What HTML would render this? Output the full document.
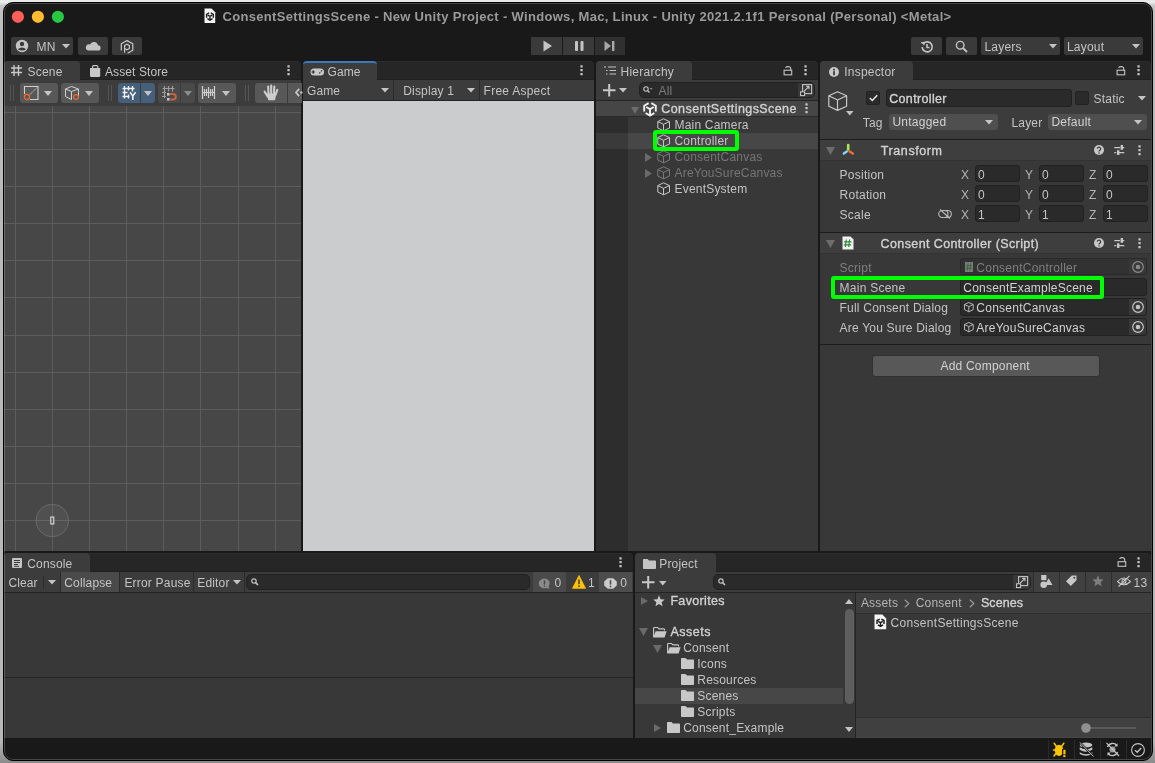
<!DOCTYPE html>
<html><head><meta charset="utf-8">
<style>
*{box-sizing:border-box;margin:0;padding:0}
html,body{width:1155px;height:763px;overflow:hidden;background:linear-gradient(#e6e6e6 0px,#eeeeee 2px,#c4c4c4 6px,#bababa 40px,#b8b8b8 740px,#8a8a8a 763px);font-family:"Liberation Sans",sans-serif;font-size:12px;color:#c4c4c4}
.a{position:absolute}
#win{position:absolute;left:3px;top:2px;width:1150px;height:759px;border:1px solid #000;border-radius:10px;background:#191919;overflow:hidden}
#c{position:absolute;left:-4px;top:-3px;width:1155px;height:763px;will-change:transform}
.t{position:absolute;white-space:nowrap}
svg{position:absolute;overflow:visible}
</style></head><body>
<div id="win"><div id="c">
<svg style="left:0px;top:0px;" width="80" height="30" viewBox="0 0 80 30"><circle cx="17.9" cy="16.8" r="6.1" fill="#ff5f57"/><circle cx="37.9" cy="16.8" r="6.1" fill="#febc2e"/><circle cx="57.9" cy="16.8" r="6.1" fill="#28c840"/></svg>
<svg style="left:204px;top:8px;" width="12" height="16" viewBox="0 0 12 16"><path d="M0.5 0.5H7.5L11.2 4.2V15H0.5Z" fill="#f4f4f4"/><g transform="translate(1.9 4.2) scale(0.58)"><g fill="none" stroke="#1a1a1a" stroke-width="2.4" stroke-linejoin="miter"><path d="M5.6 1.2L1.2 3.7V9.6"/><path d="M8.4 1.2L12.8 3.7V9.6"/><path d="M3.2 5L7 7.1L10.8 5M7 7.1V13"/><path d="M2.6 11L7 13.6L11.4 11"/></g></g></svg>
<div class="t" style="left:222.5px;top:10px;font-size:13px;line-height:13px;color:#9a9a9a;font-weight:bold;letter-spacing:0.32px;">ConsentSettingsScene - New Unity Project - Windows, Mac, Linux - Unity 2021.2.1f1 Personal (Personal) &lt;Metal&gt;</div>
<div class="a" style="left:11px;top:37px;width:62px;height:18px;background:#3a3a3a;border-radius:2px"></div>
<svg style="left:15px;top:39px;" width="14" height="14" viewBox="0 0 14 14"><circle cx="7" cy="7" r="6.2" fill="#c4c4c4"/><circle cx="7" cy="5" r="2.2" fill="#3a3a3a"/><path d="M2.8 10.2Q7 6.8 11.2 10.2Q7 13 2.8 10.2Z" fill="#3a3a3a"/></svg>
<div class="t" style="left:36.5px;top:41px;font-size:12px;line-height:12px;color:#c4c4c4;letter-spacing:0.3px;">MN</div>
<svg style="left:62.0px;top:44px;" width="8" height="4.5" viewBox="0 0 8 4.5"><path d="M0 0H8L4.0 4.5Z" fill="#c4c4c4"/></svg>
<div class="a" style="left:78px;top:37px;width:30px;height:18px;background:#3a3a3a;border-radius:2px"></div>
<svg style="left:85px;top:40px;" width="16" height="12" viewBox="0 0 16 12"><path d="M3 10.5H13A2.6 2.6 0 0 0 13 5.3A4.2 4.2 0 0 0 5 4.5A3 3 0 0 0 3 10.5Z" fill="#c4c4c4"/></svg>
<div class="a" style="left:112px;top:37px;width:30px;height:18px;background:#3a3a3a;border-radius:2px"></div>
<svg style="left:119px;top:40px;" width="16" height="14" viewBox="0 0 16 14"><path d="M2.3 10.6V3.8L8 0.6L13.8 3.8V10.3L8.6 13.3" fill="none" stroke="#c8c8c8" stroke-width="1.2" stroke-linejoin="round"/><path d="M5.6 12.8V5.6L8 4.2L10.4 5.6V8.4L8 9.8L5.6 8.4" fill="none" stroke="#c8c8c8" stroke-width="1.2" stroke-linejoin="round"/></svg>
<div class="a" style="left:531px;top:37px;width:31px;height:18px;background:#3a3a3a;"></div>
<div class="a" style="left:563px;top:37px;width:31px;height:18px;background:#3a3a3a;"></div>
<div class="a" style="left:595px;top:37px;width:30px;height:18px;background:#303030;"></div>
<svg style="left:543px;top:40px;" width="10" height="12" viewBox="0 0 10 12"><path d="M0.5 0.5L9 6L0.5 11.5Z" fill="#c4c4c4"/></svg>
<svg style="left:575px;top:41px;" width="9" height="10" viewBox="0 0 9 10"><rect x="0" y="0" width="3" height="10" rx="1" fill="#c4c4c4"/><rect x="5.5" y="0" width="3" height="10" rx="1" fill="#c4c4c4"/></svg>
<svg style="left:604px;top:41px;" width="11" height="10" viewBox="0 0 11 10"><path d="M0.5 0L7 5L0.5 10Z" fill="#a8a8a8"/><rect x="8" y="0" width="2.4" height="10" fill="#a8a8a8"/></svg>
<div class="a" style="left:911px;top:37px;width:31px;height:18px;background:#3a3a3a;border-radius:2px"></div>
<svg style="left:919px;top:39px;" width="16" height="16" viewBox="0 0 16 16"><path d="M3.2 8A5 5 0 1 0 4.6 4.4" fill="none" stroke="#c4c4c4" stroke-width="1.6"/><path d="M1.5 3.2L5.6 2.8L5.4 6.6Z" fill="#c4c4c4"/><path d="M8 5V8.5H10.5" fill="none" stroke="#c4c4c4" stroke-width="1.6"/></svg>
<div class="a" style="left:946px;top:37px;width:31px;height:18px;background:#3a3a3a;border-radius:2px"></div>
<svg style="left:955px;top:40px;" width="14" height="14" viewBox="0 0 14 14"><circle cx="5.2" cy="5.2" r="3.8" fill="none" stroke="#c4c4c4" stroke-width="1.4"/><path d="M8 8L12 12" stroke="#c4c4c4" stroke-width="1.8"/></svg>
<div class="a" style="left:981px;top:37px;width:79px;height:18px;background:#3a3a3a;border-radius:2px"></div>
<div class="t" style="left:984.5px;top:41px;font-size:12px;line-height:12px;color:#c4c4c4;letter-spacing:0.2px;">Layers</div>
<svg style="left:1049.0px;top:44px;" width="8" height="4.5" viewBox="0 0 8 4.5"><path d="M0 0H8L4.0 4.5Z" fill="#c4c4c4"/></svg>
<div class="a" style="left:1064px;top:37px;width:79px;height:18px;background:#3a3a3a;border-radius:2px"></div>
<div class="t" style="left:1067px;top:41px;font-size:12px;line-height:12px;color:#c4c4c4;letter-spacing:0.2px;">Layout</div>
<svg style="left:1132.0px;top:44px;" width="8" height="4.5" viewBox="0 0 8 4.5"><path d="M0 0H8L4.0 4.5Z" fill="#c4c4c4"/></svg>
<div class="a" style="left:4px;top:61px;width:297px;height:19px;background:#262626;border-radius:4px 4px 0 0;border-top:1px solid #2c2c2c;border-bottom:1px solid #202020"></div>
<div class="a" style="left:4px;top:61px;width:76px;height:19px;background:#3c3c3c;border-radius:4px 4px 0 0"></div>
<div class="a" style="left:4px;top:80px;width:297px;height:26px;background:#3c3c3c;"></div>
<div class="a" style="left:4px;top:106px;width:297px;height:445px;background:#474747;overflow:hidden"></div>
<div class="a" style="left:303px;top:61px;width:291px;height:19px;background:#262626;border-radius:4px 4px 0 0;border-top:1px solid #2c2c2c;border-bottom:1px solid #202020"></div>
<div class="a" style="left:303px;top:61px;width:74px;height:19px;background:#3c3c3c;border-radius:4px 4px 0 0;border-top:2px solid #3a79bb"></div>
<div class="a" style="left:303px;top:80px;width:291px;height:21px;background:#3c3c3c;"></div>
<div class="a" style="left:303px;top:101px;width:291px;height:450px;background:#cbcccd;"></div>
<div class="a" style="left:596px;top:61px;width:222px;height:19px;background:#262626;border-radius:4px 4px 0 0;border-top:1px solid #2c2c2c;border-bottom:1px solid #202020"></div>
<div class="a" style="left:596px;top:61px;width:96px;height:19px;background:#3c3c3c;border-radius:4px 4px 0 0"></div>
<div class="a" style="left:596px;top:80px;width:222px;height:21px;background:#3c3c3c;"></div>
<div class="a" style="left:596px;top:101px;width:222px;height:450px;background:#383838;"></div>
<div class="a" style="left:820px;top:61px;width:331px;height:19px;background:#262626;border-radius:4px 4px 0 0;border-top:1px solid #2c2c2c;border-bottom:1px solid #202020"></div>
<div class="a" style="left:820px;top:61px;width:93px;height:19px;background:#3c3c3c;border-radius:4px 4px 0 0"></div>
<div class="a" style="left:820px;top:80px;width:331px;height:471px;background:#383838;"></div>
<div class="a" style="left:820px;top:80px;width:331px;height:59px;background:#3c3c3c;"></div>
<div class="a" style="left:4px;top:553px;width:629px;height:19px;background:#262626;border-radius:4px 4px 0 0;border-top:1px solid #2c2c2c;border-bottom:1px solid #202020"></div>
<div class="a" style="left:4px;top:553px;width:86px;height:19px;background:#3c3c3c;border-radius:4px 4px 0 0"></div>
<div class="a" style="left:4px;top:572px;width:629px;height:20px;background:#3c3c3c;"></div>
<div class="a" style="left:4px;top:592px;width:629px;height:146px;background:#383838;"></div>
<div class="a" style="left:635px;top:553px;width:516px;height:19px;background:#262626;border-radius:4px 4px 0 0;border-top:1px solid #2c2c2c;border-bottom:1px solid #202020"></div>
<div class="a" style="left:635px;top:553px;width:81px;height:19px;background:#3c3c3c;border-radius:4px 4px 0 0"></div>
<div class="a" style="left:635px;top:572px;width:516px;height:20px;background:#3c3c3c;"></div>
<div class="a" style="left:635px;top:592px;width:516px;height:146px;background:#383838;"></div>
<svg style="left:11px;top:65px;" width="11" height="11" viewBox="0 0 11 11"><path d="M3 0V11M7.5 0V11M0 3H11M0 7.5H11" stroke="#c8c8c8" stroke-width="1.4"/></svg>
<div class="t" style="left:27.5px;top:66px;font-size:12px;line-height:12px;color:#c4c4c4;letter-spacing:0.2px;">Scene</div>
<svg style="left:89px;top:64px;" width="12" height="14" viewBox="0 0 12 14"><path d="M3.6 4.5V2.8Q3.6 1.6 4.8 1.6H7.6Q8.8 1.6 8.8 2.8V4.5" fill="none" stroke="#c8c8c8" stroke-width="1.2"/><path d="M1 4H11.2V11.8Q11.2 12.9 10.1 12.9H2.1Q1 12.9 1 11.8Z" fill="#c8c8c8"/></svg>
<div class="t" style="left:105px;top:66px;font-size:12px;line-height:12px;color:#c4c4c4;letter-spacing:0.1px;">Asset Store</div>
<svg style="left:286.5px;top:65px;" width="3" height="11" viewBox="0 0 3 11"><rect x="0.4" y="0.2" width="2.3" height="2.3" rx="0.5" fill="#c4c4c4"/><rect x="0.4" y="4.05" width="2.3" height="2.3" rx="0.5" fill="#c4c4c4"/><rect x="0.4" y="7.9" width="2.3" height="2.3" rx="0.5" fill="#c4c4c4"/></svg>
<div class="a" style="left:10px;top:85px;width:1px;height:16px;background:#555555;"></div>
<div class="a" style="left:13px;top:85px;width:1px;height:16px;background:#555555;"></div>
<div class="a" style="left:20px;top:83px;width:38px;height:20px;background:#585858;border-radius:3px"></div>
<svg style="left:24px;top:86px;" width="15" height="15" viewBox="0 0 15 15"><path d="M0.5 8V0.5H14V13.5H6" fill="none" stroke="#d0d0d0" stroke-width="1.1"/><path d="M5 9.5L13 1.5" stroke="#d0d0d0" stroke-width="1" stroke-dasharray="1.3 0.7"/><circle cx="3" cy="11" r="2.6" fill="none" stroke="#f06a2e" stroke-width="1.2"/></svg>
<svg style="left:44.0px;top:91px;" width="8" height="5" viewBox="0 0 8 5"><path d="M0 0H8L4.0 5Z" fill="#c4c4c4"/></svg>
<div class="a" style="left:61px;top:83px;width:38px;height:20px;background:#585858;border-radius:3px"></div>
<svg style="left:65px;top:86px;" width="15" height="15" viewBox="0 0 15 15"><path d="M6.5 0.5L13.5 3V10.5M13.5 3L6.5 5.5L0.5 3L6.5 0.5M0.5 3V10.5L6.5 13.5M6.5 5.5V13.5" fill="none" stroke="#d0d0d0" stroke-width="1"/><circle cx="11" cy="11" r="2.4" fill="#585858" stroke="#f06a2e" stroke-width="1.2"/></svg>
<svg style="left:85.0px;top:91px;" width="8" height="5" viewBox="0 0 8 5"><path d="M0 0H8L4.0 5Z" fill="#c4c4c4"/></svg>
<div class="a" style="left:108px;top:85px;width:1px;height:16px;background:#555555;"></div>
<div class="a" style="left:111px;top:85px;width:1px;height:16px;background:#555555;"></div>
<div class="a" style="left:118px;top:83px;width:22px;height:20px;background:#46607c;border-radius:3px 0 0 3px"></div>
<div class="a" style="left:141px;top:83px;width:14px;height:20px;background:#46607c;border-radius:0 3px 3px 0"></div>
<svg style="left:122px;top:86px;" width="15" height="15" viewBox="0 0 15 15"><path d="M2.5 0V12.5M6.5 0V4.5M6.5 8.5V12.5M10.5 0V5.5M0.5 2.5H12.5M0.5 6.5H5.5M0.5 10.5H7.5" stroke="#f0f0f0" stroke-width="1.3"/><path d="M8 6.3L10.8 10L13.6 6.3M10.8 10V14" fill="none" stroke="#f0f0f0" stroke-width="1.6"/></svg>
<svg style="left:144.0px;top:91px;" width="8" height="5" viewBox="0 0 8 5"><path d="M0 0H8L4.0 5Z" fill="#c4c4c4"/></svg>
<div class="a" style="left:158px;top:83px;width:22px;height:20px;background:#4a4a4a;border-radius:3px 0 0 3px"></div>
<div class="a" style="left:181px;top:83px;width:14px;height:20px;background:#4a4a4a;border-radius:0 3px 3px 0"></div>
<svg style="left:162px;top:86px;" width="15" height="15" viewBox="0 0 15 15"><path d="M2.5 0V12M6.5 0V5.5M10.5 0V5.5M0.5 2.5H12.5M0 6.5H4M0 10.5H4" stroke="#9c9c9c" stroke-width="1.2"/><rect x="5" y="7" width="2.6" height="2.6" fill="#c4c4c4"/><rect x="5" y="12" width="2.6" height="2.6" fill="#c4c4c4"/><path d="M8.3 8H11A2.75 2.75 0 0 1 11 13.5H8.3" fill="none" stroke="#c8643c" stroke-width="2"/></svg>
<svg style="left:184.0px;top:91px;" width="8" height="5" viewBox="0 0 8 5"><path d="M0 0H8L4.0 5Z" fill="#8c8c8c"/></svg>
<div class="a" style="left:198px;top:83px;width:38px;height:20px;background:#585858;border-radius:3px"></div>
<svg style="left:202px;top:86px;" width="14" height="14" viewBox="0 0 14 14"><path d="M0.5 0V13M12.5 0V13M6.5 1V12M2.5 3V10M4.5 3V10M8.5 3V10M10.5 3V10M0.5 6.5H12.5" stroke="#d0d0d0" stroke-width="1.2"/></svg>
<svg style="left:222.0px;top:91px;" width="8" height="5" viewBox="0 0 8 5"><path d="M0 0H8L4.0 5Z" fill="#c4c4c4"/></svg>
<div class="a" style="left:245px;top:85px;width:1px;height:16px;background:#555555;"></div>
<div class="a" style="left:248px;top:85px;width:1px;height:16px;background:#555555;"></div>
<div class="a" style="left:255px;top:83px;width:32px;height:20px;background:#585858;border-radius:3px 0 0 3px"></div>
<svg style="left:262px;top:84px;" width="17" height="17" viewBox="0 0 17 17"><g stroke="#cccccc" stroke-width="2.1" stroke-linecap="round"><path d="M2.6 7.6L6 13M6.2 2.6L6.5 10M9.2 1.6V10M12.3 2.6L12 10M15.3 5.9L13.5 11"/></g><path d="M4.8 9.5H14.4L13 16.2H6.3Z" fill="#cccccc"/></svg>
<div class="a" style="left:288px;top:83px;width:14px;height:20px;background:#585858;"></div>
<svg style="left:295px;top:88px;" width="8" height="9" viewBox="0 0 8 9"><path d="M4.2 0.8L1 4.5L4.2 8.2" fill="none" stroke="#c4c4c4" stroke-width="1.8"/><circle cx="6.3" cy="4.5" r="1.2" fill="#c4c4c4"/></svg>
<svg style="left:4px;top:106px;overflow:hidden" width="297" height="445" viewBox="0 0 297 445"><rect x="11" y="0" width="1" height="445" fill="#5d5d5d"/><rect x="48" y="0" width="1" height="445" fill="#5d5d5d"/><rect x="85" y="0" width="1" height="445" fill="#5d5d5d"/><rect x="122" y="0" width="1" height="445" fill="#5d5d5d"/><rect x="159" y="0" width="1" height="445" fill="#5d5d5d"/><rect x="196" y="0" width="1" height="445" fill="#5d5d5d"/><rect x="234" y="0" width="1" height="445" fill="#5d5d5d"/><rect x="271" y="0" width="1" height="445" fill="#5d5d5d"/><rect x="0" y="6" width="297" height="1" fill="#5d5d5d"/><rect x="0" y="43" width="297" height="1" fill="#5d5d5d"/><rect x="0" y="80" width="297" height="1" fill="#5d5d5d"/><rect x="0" y="117" width="297" height="1" fill="#5d5d5d"/><rect x="0" y="154" width="297" height="1" fill="#5d5d5d"/><rect x="0" y="191" width="297" height="1" fill="#5d5d5d"/><rect x="0" y="229" width="297" height="1" fill="#5d5d5d"/><rect x="0" y="266" width="297" height="1" fill="#5d5d5d"/><rect x="0" y="303" width="297" height="1" fill="#5d5d5d"/><rect x="0" y="340" width="297" height="1" fill="#5d5d5d"/><rect x="0" y="377" width="297" height="1" fill="#5d5d5d"/><rect x="0" y="414" width="297" height="1" fill="#5d5d5d"/><circle cx="48.3" cy="414.5" r="16.3" fill="#ffffff" fill-opacity="0.05" stroke="#707070" stroke-width="0.8"/><rect x="46.8" y="411" width="3" height="7" fill="none" stroke="#e8e8e8" stroke-width="1"/></svg>
<svg style="left:310px;top:68px;" width="15" height="8" viewBox="0 0 15 8"><rect x="0.5" y="0.5" width="13.5" height="7" rx="3.5" fill="#c8c8c8"/><path d="M3.2 2.3V5.7M1.5 4H4.9" stroke="#2a2a2a" stroke-width="1.1"/><path d="M9.3 5.3L10.3 4.3M11 3.3L12 2.3" stroke="#2a2a2a" stroke-width="1.2"/></svg>
<div class="t" style="left:327.5px;top:66px;font-size:12px;line-height:12px;color:#c4c4c4;letter-spacing:0.1px;">Game</div>
<svg style="left:579.5px;top:65px;" width="3" height="11" viewBox="0 0 3 11"><rect x="0.4" y="0.2" width="2.3" height="2.3" rx="0.5" fill="#c4c4c4"/><rect x="0.4" y="4.05" width="2.3" height="2.3" rx="0.5" fill="#c4c4c4"/><rect x="0.4" y="7.9" width="2.3" height="2.3" rx="0.5" fill="#c4c4c4"/></svg>
<div class="a" style="left:303px;top:100px;width:291px;height:1px;background:#232323;"></div>
<div class="t" style="left:307px;top:85px;font-size:12px;line-height:12px;color:#c4c4c4;letter-spacing:0.1px;">Game</div>
<svg style="left:381.0px;top:88px;" width="8" height="4.5" viewBox="0 0 8 4.5"><path d="M0 0H8L4.0 4.5Z" fill="#c4c4c4"/></svg>
<div class="a" style="left:393px;top:80px;width:1px;height:20px;background:#2a2a2a;"></div>
<div class="t" style="left:403.3px;top:85px;font-size:12px;line-height:12px;color:#c4c4c4;letter-spacing:0.15px;">Display 1</div>
<svg style="left:467.0px;top:88px;" width="8" height="4.5" viewBox="0 0 8 4.5"><path d="M0 0H8L4.0 4.5Z" fill="#c4c4c4"/></svg>
<div class="a" style="left:479px;top:80px;width:1px;height:20px;background:#2a2a2a;"></div>
<div class="t" style="left:483.6px;top:85px;font-size:12px;line-height:12px;color:#c4c4c4;letter-spacing:0.25px;">Free Aspect</div>
<svg style="left:604px;top:66px;" width="12" height="10" viewBox="0 0 12 10"><path d="M0 1H2M4 1H12M2 4.5H3.5M5.5 4.5H12M2 8H3.5M5.5 8H12" stroke="#c4c4c4" stroke-width="1.2"/></svg>
<div class="t" style="left:620.5px;top:66px;font-size:12px;line-height:12px;color:#c4c4c4;letter-spacing:0.25px;">Hierarchy</div>
<svg style="left:783px;top:66px;" width="10" height="9" viewBox="0 0 10 9"><path d="M7.7 4.2V2.6Q7.7 0.6 5.2 0.6Q3.3 0.6 2.5 1.8" fill="none" stroke="#c4c4c4" stroke-width="1.1"/><rect x="1.1" y="4.2" width="7.6" height="4.6" fill="none" stroke="#c4c4c4" stroke-width="1.1"/></svg>
<svg style="left:803.5px;top:65px;" width="3" height="11" viewBox="0 0 3 11"><rect x="0.4" y="0.2" width="2.3" height="2.3" rx="0.5" fill="#c4c4c4"/><rect x="0.4" y="4.05" width="2.3" height="2.3" rx="0.5" fill="#c4c4c4"/><rect x="0.4" y="7.9" width="2.3" height="2.3" rx="0.5" fill="#c4c4c4"/></svg>
<div class="a" style="left:596px;top:100px;width:222px;height:1px;background:#232323;"></div>
<svg style="left:603px;top:84px;" width="13" height="13" viewBox="0 0 13 13"><path d="M6.2 0V12.5M0 6.2H12.5" stroke="#c8c8c8" stroke-width="2"/></svg>
<svg style="left:619.0px;top:88px;" width="8" height="4.5" viewBox="0 0 8 4.5"><path d="M0 0H8L4.0 4.5Z" fill="#c4c4c4"/></svg>
<div class="a" style="left:639px;top:82px;width:176px;height:16px;background:#2a2a2a;border-radius:5px;border:1px solid #212121"></div>
<svg style="left:643px;top:86px;" width="10" height="8" viewBox="0 0 10 8"><circle cx="3" cy="3" r="2.2" fill="none" stroke="#c4c4c4" stroke-width="1.1"/><path d="M4.6 4.6L6.5 6.5" stroke="#c4c4c4" stroke-width="1.3"/><path d="M6.8 2.2H9.5L8.15 3.6Z" fill="#c4c4c4"/></svg>
<div class="t" style="left:658.5px;top:85px;font-size:12px;line-height:12px;color:#7c7c7c;letter-spacing:0.2px;">All</div>
<div class="a" style="left:798px;top:83px;width:16px;height:14px;background:#383838;border-radius:0 4px 4px 0"></div>
<svg style="left:800px;top:84px;" width="13" height="13" viewBox="0 0 13 13"><rect x="2.6" y="0.6" width="9" height="9" fill="none" stroke="#c4c4c4" stroke-width="1.1"/><rect x="0.6" y="7.8" width="4" height="3.8" fill="#2a2a2a" stroke="#c4c4c4" stroke-width="1.1"/><path d="M4.2 7.2L9 2.4M6.2 2.4H9V5.2" fill="none" stroke="#c4c4c4" stroke-width="1.1"/></svg>
<div class="a" style="left:596px;top:101px;width:222px;height:15px;background:#464646;"></div>
<div class="a" style="left:596px;top:116px;width:222px;height:1px;background:#2a2a2a;"></div>
<div class="a" style="left:596px;top:117px;width:32px;height:434px;background:#2d2d2d;"></div>
<div class="a" style="left:596px;top:133px;width:32px;height:16px;background:#3a3a3a;"></div>
<div class="a" style="left:628px;top:133px;width:190px;height:16px;background:#474747;"></div>
<svg style="left:630.5px;top:106.5px;" width="8" height="7" viewBox="0 0 8 7"><path d="M0 0H8L4.0 7Z" fill="#6c6c6c"/></svg>
<svg style="left:643px;top:102px;" width="14" height="14" viewBox="0 0 14 14"><g fill="none" stroke="#f0f0f0" stroke-width="1.9" stroke-linejoin="miter"><path d="M5.6 1.2L1.2 3.7V9.6"/><path d="M8.4 1.2L12.8 3.7V9.6"/><path d="M3.2 5L7 7.1L10.8 5M7 7.1V13"/><path d="M2.6 11L7 13.6L11.4 11"/></g></svg>
<div class="t" style="left:661.3px;top:103px;font-size:12.5px;line-height:12.5px;color:#d2d2d2;-webkit-text-stroke:0.35px #d2d2d2;letter-spacing:0.42px;">ConsentSettingsScene</div>
<svg style="left:804.5px;top:103px;" width="3" height="11" viewBox="0 0 3 11"><rect x="0.4" y="0.2" width="2.3" height="2.3" rx="0.5" fill="#c4c4c4"/><rect x="0.4" y="4.05" width="2.3" height="2.3" rx="0.5" fill="#c4c4c4"/><rect x="0.4" y="7.9" width="2.3" height="2.3" rx="0.5" fill="#c4c4c4"/></svg>
<svg style="left:657px;top:118px;" width="14" height="14" viewBox="0 0 14 14"><g fill="none" stroke="#c8c8c8" stroke-width="1" stroke-linejoin="round"><path d="M6.5 0.8L12.5 3.6V10L6.5 12.8L0.8 10V3.6Z"/><path d="M0.8 3.6L6.5 6.3L12.5 3.6M6.5 6.3V12.8"/></g></svg>
<div class="t" style="left:674.5px;top:119px;font-size:12px;line-height:12px;color:#c4c4c4;letter-spacing:0.2px;">Main Camera</div>
<svg style="left:657px;top:134px;" width="14" height="14" viewBox="0 0 14 14"><g fill="none" stroke="#c8c8c8" stroke-width="1" stroke-linejoin="round"><path d="M6.5 0.8L12.5 3.6V10L6.5 12.8L0.8 10V3.6Z"/><path d="M0.8 3.6L6.5 6.3L12.5 3.6M6.5 6.3V12.8"/></g></svg>
<div class="t" style="left:674.5px;top:135px;font-size:12px;line-height:12px;color:#c4c4c4;letter-spacing:0.2px;">Controller</div>
<svg style="left:657px;top:150px;" width="14" height="14" viewBox="0 0 14 14"><g fill="none" stroke="#7a7a7a" stroke-width="1" stroke-linejoin="round"><path d="M6.5 0.8L12.5 3.6V10L6.5 12.8L0.8 10V3.6Z"/><path d="M0.8 3.6L6.5 6.3L12.5 3.6M6.5 6.3V12.8"/></g></svg>
<div class="t" style="left:674.5px;top:151px;font-size:12px;line-height:12px;color:#767676;letter-spacing:0.2px;">ConsentCanvas</div>
<svg style="left:645px;top:152.5px;" width="7" height="9" viewBox="0 0 7 9"><path d="M0 0L7 4.5L0 9Z" fill="#6a6a6a"/></svg>
<svg style="left:657px;top:166px;" width="14" height="14" viewBox="0 0 14 14"><g fill="none" stroke="#7a7a7a" stroke-width="1" stroke-linejoin="round"><path d="M6.5 0.8L12.5 3.6V10L6.5 12.8L0.8 10V3.6Z"/><path d="M0.8 3.6L6.5 6.3L12.5 3.6M6.5 6.3V12.8"/></g></svg>
<div class="t" style="left:674.5px;top:167px;font-size:12px;line-height:12px;color:#767676;letter-spacing:0.2px;">AreYouSureCanvas</div>
<svg style="left:645px;top:168.5px;" width="7" height="9" viewBox="0 0 7 9"><path d="M0 0L7 4.5L0 9Z" fill="#6a6a6a"/></svg>
<svg style="left:657px;top:182px;" width="14" height="14" viewBox="0 0 14 14"><g fill="none" stroke="#c8c8c8" stroke-width="1" stroke-linejoin="round"><path d="M6.5 0.8L12.5 3.6V10L6.5 12.8L0.8 10V3.6Z"/><path d="M0.8 3.6L6.5 6.3L12.5 3.6M6.5 6.3V12.8"/></g></svg>
<div class="t" style="left:674.5px;top:183px;font-size:12px;line-height:12px;color:#c4c4c4;letter-spacing:0.2px;">EventSystem</div>
<svg style="left:829px;top:67px;" width="10" height="10" viewBox="0 0 10 10"><circle cx="5" cy="5" r="5" fill="#c8c8c8"/><rect x="4.1" y="4.2" width="1.8" height="4" fill="#3c3c3c"/><rect x="4.1" y="1.8" width="1.8" height="1.7" fill="#3c3c3c"/></svg>
<div class="t" style="left:844.3px;top:66px;font-size:12px;line-height:12px;color:#c4c4c4;letter-spacing:0.2px;">Inspector</div>
<svg style="left:1116px;top:66px;" width="10" height="9" viewBox="0 0 10 9"><path d="M7.7 4.2V2.6Q7.7 0.6 5.2 0.6Q3.3 0.6 2.5 1.8" fill="none" stroke="#c4c4c4" stroke-width="1.1"/><rect x="1.1" y="4.2" width="7.6" height="4.6" fill="none" stroke="#c4c4c4" stroke-width="1.1"/></svg>
<svg style="left:1136.5px;top:65px;" width="3" height="11" viewBox="0 0 3 11"><rect x="0.4" y="0.2" width="2.3" height="2.3" rx="0.5" fill="#c4c4c4"/><rect x="0.4" y="4.05" width="2.3" height="2.3" rx="0.5" fill="#c4c4c4"/><rect x="0.4" y="7.9" width="2.3" height="2.3" rx="0.5" fill="#c4c4c4"/></svg>
<svg style="left:828px;top:91px;" width="20" height="21" viewBox="0 0 20 21"><g fill="none" stroke="#c8c8c8" stroke-width="1.2" stroke-linejoin="round"><path d="M9.5 0.8L18.6 4.8V15.2L9.5 19.4L0.8 15.2V4.8Z"/><path d="M0.8 4.8L9.5 9L18.6 4.8M9.5 9V19.4"/></g></svg>
<svg style="left:846.45px;top:111px;" width="7.5" height="4.5" viewBox="0 0 7.5 4.5"><path d="M0 0H7.5L3.75 4.5Z" fill="#c4c4c4"/></svg>
<div class="a" style="left:866px;top:91px;width:14px;height:14px;background:#2a2a2a;border-radius:2px;border:1px solid #222"></div>
<svg style="left:869px;top:94px;" width="9" height="8" viewBox="0 0 9 8"><path d="M0.8 4L3.3 6.5L8.2 1.2" fill="none" stroke="#e8e8e8" stroke-width="1.5"/></svg>
<div class="a" style="left:886px;top:89px;width:186px;height:18px;background:#2a2a2a;border-radius:3px;border:1px solid #212121"></div>
<div class="t" style="left:889.2px;top:93px;font-size:12.5px;line-height:12.5px;color:#d2d2d2;-webkit-text-stroke:0.35px #d2d2d2;letter-spacing:0.35px;">Controller</div>
<div class="a" style="left:1075px;top:91px;width:14px;height:14px;background:#2a2a2a;border-radius:2px;border:1px solid #222"></div>
<div class="t" style="left:1093.6px;top:93px;font-size:12px;line-height:12px;color:#c4c4c4;letter-spacing:0.2px;">Static</div>
<svg style="left:1138.0px;top:96px;" width="8" height="4.5" viewBox="0 0 8 4.5"><path d="M0 0H8L4.0 4.5Z" fill="#c4c4c4"/></svg>
<div class="t" style="left:862.7px;top:117px;font-size:12px;line-height:12px;color:#c4c4c4;letter-spacing:0.2px;">Tag</div>
<div class="a" style="left:889px;top:114px;width:109px;height:16px;background:#4f4f4f;border-radius:3px"></div>
<div class="t" style="left:892.4px;top:116px;font-size:12px;line-height:12px;color:#d2d2d2;letter-spacing:0.25px;">Untagged</div>
<svg style="left:984.7px;top:120px;" width="8" height="4.5" viewBox="0 0 8 4.5"><path d="M0 0H8L4.0 4.5Z" fill="#c4c4c4"/></svg>
<div class="t" style="left:1011.4px;top:117px;font-size:12px;line-height:12px;color:#c4c4c4;letter-spacing:0.2px;">Layer</div>
<div class="a" style="left:1048px;top:114px;width:99px;height:16px;background:#4f4f4f;border-radius:3px"></div>
<div class="t" style="left:1051.4px;top:116px;font-size:12px;line-height:12px;color:#d2d2d2;letter-spacing:0.25px;">Default</div>
<svg style="left:1134.2px;top:120px;" width="8" height="4.5" viewBox="0 0 8 4.5"><path d="M0 0H8L4.0 4.5Z" fill="#c4c4c4"/></svg>
<div class="a" style="left:820px;top:139px;width:331px;height:1px;background:#1c1c1c;"></div>
<div class="a" style="left:820px;top:140px;width:331px;height:20px;background:#3e3e3e;"></div>
<div class="a" style="left:820px;top:160px;width:331px;height:1px;background:#333333;"></div>
<svg style="left:825.8px;top:147px;" width="9" height="8" viewBox="0 0 9 8"><path d="M0 0H9L4.5 8Z" fill="#6d6d6d"/></svg>
<svg style="left:842px;top:144px;" width="13" height="12" viewBox="0 0 13 12"><path d="M6.2 1V5.4" stroke="#a6ea50" stroke-width="2.6" stroke-linecap="round"/><path d="M4.8 7.5L1.8 9.5" stroke="#7fd8ff" stroke-width="2.4" stroke-linecap="round"/><path d="M7.6 7.5L10.8 9.6" stroke="#ff6a30" stroke-width="2.4" stroke-linecap="round"/></svg>
<div class="t" style="left:880.8px;top:145px;font-size:12.5px;line-height:12.5px;color:#d2d2d2;-webkit-text-stroke:0.35px #d2d2d2;letter-spacing:0.59px;">Transform</div>
<svg style="left:1094px;top:145px;" width="10" height="10" viewBox="0 0 10 10"><circle cx="5" cy="5" r="5" fill="#c8c8c8"/><path d="M3.3 3.8A1.7 1.7 0 1 1 5.6 5.4Q5 5.7 5 6.5" fill="none" stroke="#3e3e3e" stroke-width="1.2"/><rect x="4.4" y="7.4" width="1.3" height="1.3" fill="#3e3e3e"/></svg>
<svg style="left:1114px;top:145px;" width="11" height="11" viewBox="0 0 11 11"><path d="M0.3 2.6H6M6.8 2.6H10.3M0.3 7.6H2.2M3 7.6H10.3" stroke="#c8c8c8" stroke-width="1.3"/><rect x="6.6" y="0" width="2.4" height="4.8" fill="#c8c8c8"/><rect x="3" y="5.2" width="2.4" height="4.8" fill="#c8c8c8"/></svg>
<svg style="left:1137.5px;top:145px;" width="3" height="11" viewBox="0 0 3 11"><rect x="0.4" y="0.2" width="2.3" height="2.3" rx="0.5" fill="#c4c4c4"/><rect x="0.4" y="4.05" width="2.3" height="2.3" rx="0.5" fill="#c4c4c4"/><rect x="0.4" y="7.9" width="2.3" height="2.3" rx="0.5" fill="#c4c4c4"/></svg>
<div class="t" style="left:839.6px;top:169px;font-size:12px;line-height:12px;color:#c4c4c4;letter-spacing:0.25px;">Position</div>
<div class="t" style="left:961px;top:169px;font-size:12px;line-height:12px;color:#b4b4b4;">X</div>
<div class="a" style="left:975px;top:165px;width:45px;height:17px;background:#2a2a2a;border-radius:3px;border:1px solid #212121"></div>
<div class="t" style="left:978px;top:169px;font-size:12px;line-height:12px;color:#c4c4c4;">0</div>
<div class="t" style="left:1025px;top:169px;font-size:12px;line-height:12px;color:#b4b4b4;">Y</div>
<div class="a" style="left:1039px;top:165px;width:45px;height:17px;background:#2a2a2a;border-radius:3px;border:1px solid #212121"></div>
<div class="t" style="left:1042px;top:169px;font-size:12px;line-height:12px;color:#c4c4c4;">0</div>
<div class="t" style="left:1089px;top:169px;font-size:12px;line-height:12px;color:#b4b4b4;">Z</div>
<div class="a" style="left:1103px;top:165px;width:45px;height:17px;background:#2a2a2a;border-radius:3px;border:1px solid #212121"></div>
<div class="t" style="left:1106px;top:169px;font-size:12px;line-height:12px;color:#c4c4c4;">0</div>
<div class="t" style="left:839.6px;top:189px;font-size:12px;line-height:12px;color:#c4c4c4;letter-spacing:0.25px;">Rotation</div>
<div class="t" style="left:961px;top:189px;font-size:12px;line-height:12px;color:#b4b4b4;">X</div>
<div class="a" style="left:975px;top:185px;width:45px;height:17px;background:#2a2a2a;border-radius:3px;border:1px solid #212121"></div>
<div class="t" style="left:978px;top:189px;font-size:12px;line-height:12px;color:#c4c4c4;">0</div>
<div class="t" style="left:1025px;top:189px;font-size:12px;line-height:12px;color:#b4b4b4;">Y</div>
<div class="a" style="left:1039px;top:185px;width:45px;height:17px;background:#2a2a2a;border-radius:3px;border:1px solid #212121"></div>
<div class="t" style="left:1042px;top:189px;font-size:12px;line-height:12px;color:#c4c4c4;">0</div>
<div class="t" style="left:1089px;top:189px;font-size:12px;line-height:12px;color:#b4b4b4;">Z</div>
<div class="a" style="left:1103px;top:185px;width:45px;height:17px;background:#2a2a2a;border-radius:3px;border:1px solid #212121"></div>
<div class="t" style="left:1106px;top:189px;font-size:12px;line-height:12px;color:#c4c4c4;">0</div>
<div class="t" style="left:839.6px;top:209px;font-size:12px;line-height:12px;color:#c4c4c4;letter-spacing:0.25px;">Scale</div>
<div class="t" style="left:961px;top:209px;font-size:12px;line-height:12px;color:#b4b4b4;">X</div>
<div class="a" style="left:975px;top:205px;width:45px;height:17px;background:#2a2a2a;border-radius:3px;border:1px solid #212121"></div>
<div class="t" style="left:978px;top:209px;font-size:12px;line-height:12px;color:#c4c4c4;">1</div>
<div class="t" style="left:1025px;top:209px;font-size:12px;line-height:12px;color:#b4b4b4;">Y</div>
<div class="a" style="left:1039px;top:205px;width:45px;height:17px;background:#2a2a2a;border-radius:3px;border:1px solid #212121"></div>
<div class="t" style="left:1042px;top:209px;font-size:12px;line-height:12px;color:#c4c4c4;">1</div>
<div class="t" style="left:1089px;top:209px;font-size:12px;line-height:12px;color:#b4b4b4;">Z</div>
<div class="a" style="left:1103px;top:205px;width:45px;height:17px;background:#2a2a2a;border-radius:3px;border:1px solid #212121"></div>
<div class="t" style="left:1106px;top:209px;font-size:12px;line-height:12px;color:#c4c4c4;">1</div>
<svg style="left:939px;top:209px;" width="12" height="10" viewBox="0 0 12 10"><path d="M3.2 1.5H5.5A3.5 3.5 0 0 1 5.5 8.5H3.2A3.5 3.5 0 0 1 3.2 1.5ZM6.5 1.5H8.8A3.5 3.5 0 0 1 8.8 8.5H6.5" fill="none" stroke="#b8b8b8" stroke-width="1.1"/><path d="M1 0.5L11 9.5" stroke="#b8b8b8" stroke-width="1.1"/></svg>
<div class="a" style="left:820px;top:232px;width:331px;height:1px;background:#1c1c1c;"></div>
<div class="a" style="left:820px;top:233px;width:331px;height:20px;background:#3e3e3e;"></div>
<div class="a" style="left:820px;top:253px;width:331px;height:1px;background:#333333;"></div>
<svg style="left:825.8px;top:240px;" width="9" height="8" viewBox="0 0 9 8"><path d="M0 0H9L4.5 8Z" fill="#6d6d6d"/></svg>
<svg style="left:842px;top:236px;" width="12" height="14" viewBox="0 0 12 14"><path d="M0.5 0.5H8.5L11.5 3.5V13.5H0.5Z" fill="#f0f0f0"/><path d="M4.3 3.5L3.4 11M7.6 3.5L6.7 11M2 5.8H9.5M1.7 8.8H9.2" stroke="#2f8a3a" stroke-width="1.2"/></svg>
<div class="t" style="left:880.6px;top:238px;font-size:12.5px;line-height:12.5px;color:#d2d2d2;-webkit-text-stroke:0.35px #d2d2d2;letter-spacing:0.39px;">Consent Controller (Script)</div>
<svg style="left:1094px;top:238px;" width="10" height="10" viewBox="0 0 10 10"><circle cx="5" cy="5" r="5" fill="#c8c8c8"/><path d="M3.3 3.8A1.7 1.7 0 1 1 5.6 5.4Q5 5.7 5 6.5" fill="none" stroke="#3e3e3e" stroke-width="1.2"/><rect x="4.4" y="7.4" width="1.3" height="1.3" fill="#3e3e3e"/></svg>
<svg style="left:1114px;top:238px;" width="11" height="11" viewBox="0 0 11 11"><path d="M0.3 2.6H6M6.8 2.6H10.3M0.3 7.6H2.2M3 7.6H10.3" stroke="#c8c8c8" stroke-width="1.3"/><rect x="6.6" y="0" width="2.4" height="4.8" fill="#c8c8c8"/><rect x="3" y="5.2" width="2.4" height="4.8" fill="#c8c8c8"/></svg>
<svg style="left:1137.5px;top:238px;" width="3" height="11" viewBox="0 0 3 11"><rect x="0.4" y="0.2" width="2.3" height="2.3" rx="0.5" fill="#c4c4c4"/><rect x="0.4" y="4.05" width="2.3" height="2.3" rx="0.5" fill="#c4c4c4"/><rect x="0.4" y="7.9" width="2.3" height="2.3" rx="0.5" fill="#c4c4c4"/></svg>
<div class="t" style="left:839.6px;top:262px;font-size:12px;line-height:12px;color:#7f7f7f;letter-spacing:0.25px;">Script</div>
<div class="a" style="left:960px;top:258px;width:187px;height:17px;background:#323232;border-radius:3px;border:1px solid #2a2a2a"></div>
<div class="a" style="left:1129px;top:259px;width:17px;height:15px;background:#383838;border-radius:0 3px 3px 0"></div>
<svg style="left:965px;top:262px;" width="8" height="10" viewBox="0 0 8 10"><rect x="0" y="0" width="8" height="10" fill="#7a7a7a"/><path d="M3 1.5L2.3 8.5M5.7 1.5L5 8.5M1 3.8H7M0.8 6.3H6.8" stroke="#2f6a3a" stroke-width="0.9"/></svg>
<div class="t" style="left:976.3px;top:262px;font-size:12px;line-height:12px;color:#7f7f7f;letter-spacing:0.25px;">ConsentController</div>
<svg style="left:1132px;top:261px;" width="12" height="12" viewBox="0 0 12 12"><circle cx="6" cy="6" r="5.3" fill="none" stroke="#8a8a8a" stroke-width="1.2"/><circle cx="6" cy="6" r="2.3" fill="#8a8a8a"/></svg>
<div class="t" style="left:839.6px;top:282px;font-size:12px;line-height:12px;color:#c4c4c4;letter-spacing:0.25px;">Main Scene</div>
<div class="a" style="left:960px;top:278px;width:187px;height:18px;background:#2a2a2a;border-radius:3px;border:1px solid #212121"></div>
<div class="t" style="left:963.3px;top:282px;font-size:12px;line-height:12px;color:#d2d2d2;letter-spacing:0.22px;">ConsentExampleScene</div>
<div class="t" style="left:839.6px;top:302px;font-size:12px;line-height:12px;color:#c4c4c4;letter-spacing:0.2px;">Full Consent Dialog</div>
<div class="a" style="left:960px;top:298px;width:187px;height:18px;background:#2a2a2a;border-radius:3px;border:1px solid #212121"></div>
<div class="a" style="left:1129px;top:299px;width:17px;height:16px;background:#383838;border-radius:0 3px 3px 0"></div>
<svg style="left:964px;top:302px;" width="10" height="11" viewBox="0 0 10 11"><g fill="none" stroke="#c4c4c4" stroke-width="0.9" stroke-linejoin="round"><path d="M4.8 0.5L9.2 2.5V7.6L4.8 9.8L0.5 7.6V2.5Z"/><path d="M0.5 2.5L4.8 4.6L9.2 2.5M4.8 4.6V9.8"/></g></svg>
<div class="t" style="left:976.3px;top:302px;font-size:12px;line-height:12px;color:#d2d2d2;letter-spacing:0.25px;">ConsentCanvas</div>
<svg style="left:1132px;top:301px;" width="12" height="12" viewBox="0 0 12 12"><circle cx="6" cy="6" r="5.3" fill="none" stroke="#c4c4c4" stroke-width="1.2"/><circle cx="6" cy="6" r="2.3" fill="#c4c4c4"/></svg>
<div class="t" style="left:839.6px;top:322px;font-size:12px;line-height:12px;color:#c4c4c4;letter-spacing:0.2px;">Are You Sure Dialog</div>
<div class="a" style="left:960px;top:318px;width:187px;height:18px;background:#2a2a2a;border-radius:3px;border:1px solid #212121"></div>
<div class="a" style="left:1129px;top:319px;width:17px;height:16px;background:#383838;border-radius:0 3px 3px 0"></div>
<svg style="left:964px;top:322px;" width="10" height="11" viewBox="0 0 10 11"><g fill="none" stroke="#c4c4c4" stroke-width="0.9" stroke-linejoin="round"><path d="M4.8 0.5L9.2 2.5V7.6L4.8 9.8L0.5 7.6V2.5Z"/><path d="M0.5 2.5L4.8 4.6L9.2 2.5M4.8 4.6V9.8"/></g></svg>
<div class="t" style="left:976.3px;top:322px;font-size:12px;line-height:12px;color:#d2d2d2;letter-spacing:0.25px;">AreYouSureCanvas</div>
<svg style="left:1132px;top:321px;" width="12" height="12" viewBox="0 0 12 12"><circle cx="6" cy="6" r="5.3" fill="none" stroke="#c4c4c4" stroke-width="1.2"/><circle cx="6" cy="6" r="2.3" fill="#c4c4c4"/></svg>
<div class="a" style="left:820px;top:344px;width:331px;height:1px;background:#1c1c1c;"></div>
<div class="a" style="left:872px;top:355px;width:228px;height:22px;background:#585858;border-radius:3px;border:1px solid #303030"></div>
<div class="t" style="left:940.5px;top:360px;font-size:12px;line-height:12px;color:#d2d2d2;letter-spacing:0.2px;">Add Component</div>
<svg style="left:12px;top:558px;" width="10" height="10" viewBox="0 0 10 10"><rect x="0" y="0" width="10" height="10" rx="1" fill="#c4c4c4"/><path d="M2 2.5H8M2 4.5H8M2 6.5H6M2 8.3H7" stroke="#3c3c3c" stroke-width="1"/></svg>
<div class="t" style="left:27.3px;top:558px;font-size:12px;line-height:12px;color:#c4c4c4;letter-spacing:0.15px;">Console</div>
<svg style="left:618.5px;top:557px;" width="3" height="11" viewBox="0 0 3 11"><rect x="0.4" y="0.2" width="2.3" height="2.3" rx="0.5" fill="#c4c4c4"/><rect x="0.4" y="4.05" width="2.3" height="2.3" rx="0.5" fill="#c4c4c4"/><rect x="0.4" y="7.9" width="2.3" height="2.3" rx="0.5" fill="#c4c4c4"/></svg>
<div class="a" style="left:4px;top:592px;width:629px;height:1px;background:#242424;"></div>
<div class="t" style="left:8.4px;top:577px;font-size:12px;line-height:12px;color:#c4c4c4;letter-spacing:0.1px;">Clear</div>
<div class="a" style="left:43px;top:576px;width:1px;height:13px;background:#2e2e2e;"></div>
<svg style="left:48.2px;top:580px;" width="8" height="4.5" viewBox="0 0 8 4.5"><path d="M0 0H8L4.0 4.5Z" fill="#c4c4c4"/></svg>
<div class="a" style="left:60px;top:572px;width:1px;height:20px;background:#2a2a2a;"></div>
<div class="a" style="left:61px;top:572px;width:58px;height:20px;background:#4a4a4a;"></div>
<div class="t" style="left:64.3px;top:577px;font-size:12px;line-height:12px;color:#c4c4c4;letter-spacing:0.15px;">Collapse</div>
<div class="a" style="left:119px;top:572px;width:1px;height:20px;background:#2a2a2a;"></div>
<div class="t" style="left:124.4px;top:577px;font-size:12px;line-height:12px;color:#c4c4c4;letter-spacing:0.2px;">Error Pause</div>
<div class="a" style="left:193px;top:572px;width:1px;height:20px;background:#2a2a2a;"></div>
<div class="t" style="left:197.3px;top:577px;font-size:12px;line-height:12px;color:#c4c4c4;letter-spacing:0.15px;">Editor</div>
<svg style="left:232.5px;top:580px;" width="8" height="4.5" viewBox="0 0 8 4.5"><path d="M0 0H8L4.0 4.5Z" fill="#c4c4c4"/></svg>
<div class="a" style="left:244px;top:572px;width:1px;height:20px;background:#2a2a2a;"></div>
<div class="a" style="left:246px;top:574px;width:284px;height:16px;background:#2a2a2a;border-radius:5px;border:1px solid #212121"></div>
<svg style="left:251px;top:578px;" width="8" height="8" viewBox="0 0 8 8"><circle cx="3" cy="3" r="2.2" fill="none" stroke="#c4c4c4" stroke-width="1.2"/><path d="M4.6 4.6L7 7" stroke="#c4c4c4" stroke-width="1.6"/></svg>
<div class="a" style="left:533px;top:572px;width:33px;height:20px;background:#4a4a4a;"></div>
<svg style="left:538px;top:578px;" width="13" height="11" viewBox="0 0 13 11"><path d="M6.5 0.5A5.8 4.9 0 1 0 8.5 10L11.5 10.8L10.6 8.3A5.8 4.9 0 0 0 6.5 0.5Z" fill="#8a8a8a"/><path d="M6.5 2.3V6.6" stroke="#4a4a4a" stroke-width="1.5"/><circle cx="6.5" cy="8.2" r="0.8" fill="#4a4a4a"/></svg>
<div class="t" style="left:554.5px;top:577px;font-size:12px;line-height:12px;color:#c4c4c4;">0</div>
<div class="a" style="left:567px;top:572px;width:31px;height:20px;background:#3c3c3c;"></div>
<svg style="left:572px;top:575px;" width="14" height="14" viewBox="0 0 14 14"><path d="M7 0.5L13.5 13.3H0.5Z" fill="#ffc107" stroke="#ffc107" stroke-linejoin="round" stroke-width="0.8"/><path d="M7 4.5V9.3" stroke="#3c3c3c" stroke-width="1.5"/><circle cx="7" cy="11.2" r="0.9" fill="#3c3c3c"/></svg>
<div class="t" style="left:588px;top:577px;font-size:12px;line-height:12px;color:#c4c4c4;">1</div>
<div class="a" style="left:599px;top:572px;width:33px;height:20px;background:#4d4d4d;"></div>
<svg style="left:604px;top:578px;" width="13" height="11" viewBox="0 0 13 11"><path d="M3.8 0.3H9.2L12.8 3.4V7.6L9.2 10.7H3.8L0.2 7.6V3.4Z" fill="#cccccc"/><path d="M6.5 2.2V6.6" stroke="#4d4d4d" stroke-width="1.6"/><circle cx="6.5" cy="8.4" r="0.9" fill="#4d4d4d"/></svg>
<div class="t" style="left:620.3px;top:577px;font-size:12px;line-height:12px;color:#c4c4c4;">0</div>
<div class="a" style="left:4px;top:677px;width:629px;height:1px;background:#242424;"></div>
<svg style="left:643px;top:559px;" width="13" height="10" viewBox="0 0 13 10"><path d="M0 0.8A0.8 0.8 0 0 1 0.8 0H4.5L6 1.5H12.2A0.8 0.8 0 0 1 13 2.3V9.2A0.8 0.8 0 0 1 12.2 10H0.8A0.8 0.8 0 0 1 0 9.2Z" fill="#c4c4c4"/></svg>
<div class="t" style="left:659.3px;top:558px;font-size:12px;line-height:12px;color:#c4c4c4;letter-spacing:0.15px;">Project</div>
<svg style="left:1117px;top:557px;" width="10" height="10" viewBox="0 0 10 10"><path d="M7.7 4.2V2.6Q7.7 0.6 5.2 0.6Q3.3 0.6 2.5 1.8" fill="none" stroke="#c4c4c4" stroke-width="1.1"/><rect x="1.1" y="4.7" width="7.6" height="4.6" fill="none" stroke="#c4c4c4" stroke-width="1.1"/></svg>
<svg style="left:1136.5px;top:557px;" width="3" height="11" viewBox="0 0 3 11"><rect x="0.4" y="0.2" width="2.3" height="2.3" rx="0.5" fill="#c4c4c4"/><rect x="0.4" y="4.05" width="2.3" height="2.3" rx="0.5" fill="#c4c4c4"/><rect x="0.4" y="7.9" width="2.3" height="2.3" rx="0.5" fill="#c4c4c4"/></svg>
<div class="a" style="left:635px;top:592px;width:516px;height:1px;background:#242424;"></div>
<svg style="left:642px;top:576px;" width="13" height="13" viewBox="0 0 13 13"><path d="M6.2 0V12.5M0 6.2H12.5" stroke="#c8c8c8" stroke-width="2"/></svg>
<svg style="left:658.55px;top:581px;" width="7.5" height="4.5" viewBox="0 0 7.5 4.5"><path d="M0 0H7.5L3.75 4.5Z" fill="#c4c4c4"/></svg>
<div class="a" style="left:713px;top:574px;width:318px;height:16px;background:#2a2a2a;border-radius:5px;border:1px solid #212121"></div>
<svg style="left:718px;top:578px;" width="8" height="8" viewBox="0 0 8 8"><circle cx="3" cy="3" r="2.2" fill="none" stroke="#c4c4c4" stroke-width="1.2"/><path d="M4.6 4.6L7 7" stroke="#c4c4c4" stroke-width="1.6"/></svg>
<div class="a" style="left:1013px;top:575px;width:17px;height:14px;background:#383838;border-radius:0 4px 4px 0"></div>
<svg style="left:1015.5px;top:576px;" width="13" height="13" viewBox="0 0 13 13"><rect x="2.6" y="0.6" width="9" height="9" fill="none" stroke="#c4c4c4" stroke-width="1.1"/><rect x="0.6" y="7.8" width="4" height="3.8" fill="#2a2a2a" stroke="#c4c4c4" stroke-width="1.1"/><path d="M4.2 7.2L9 2.4M6.2 2.4H9V5.2" fill="none" stroke="#c4c4c4" stroke-width="1.1"/></svg>
<div class="a" style="left:1033px;top:572px;width:1px;height:20px;background:#2e2e2e;"></div>
<div class="a" style="left:1059px;top:572px;width:1px;height:20px;background:#2e2e2e;"></div>
<div class="a" style="left:1085px;top:572px;width:1px;height:20px;background:#2e2e2e;"></div>
<div class="a" style="left:1111px;top:572px;width:1px;height:20px;background:#2e2e2e;"></div>
<div class="a" style="left:1034px;top:572px;width:25px;height:20px;background:#404040;"></div>
<div class="a" style="left:1060px;top:572px;width:25px;height:20px;background:#404040;"></div>
<div class="a" style="left:1086px;top:572px;width:25px;height:20px;background:#404040;"></div>
<div class="a" style="left:1112px;top:572px;width:39px;height:20px;background:#404040;"></div>
<svg style="left:1040px;top:575px;" width="13" height="13" viewBox="0 0 13 13"><rect x="1.2" y="0" width="5.2" height="5.2" fill="#c8c8c8"/><circle cx="3.7" cy="9.7" r="3.3" fill="#c8c8c8"/><path d="M8.6 3.2L12.5 10H4.8Z" fill="#c8c8c8"/></svg>
<svg style="left:1066px;top:575px;" width="11" height="12" viewBox="0 0 11 12"><path d="M5.8 0.5H10.5V5.2L4.8 11L0 6.3Z" fill="#c8c8c8"/><circle cx="8.3" cy="2.8" r="1" fill="#404040"/></svg>
<svg style="left:1092px;top:575px;" width="12" height="12" viewBox="0 0 12 12"><path d="M6 0.3L7.6 4.2L11.7 4.5L8.6 7.2L9.6 11.3L6 9.1L2.4 11.3L3.4 7.2L0.3 4.5L4.4 4.2Z" fill="#7e7e7e"/></svg>
<svg style="left:1117px;top:575px;" width="14" height="12" viewBox="0 0 14 12"><path d="M0.5 6.5Q7 -0.5 13.5 6.5Q7 13 0.5 6.5Z" fill="none" stroke="#c8c8c8" stroke-width="1.1"/><circle cx="7" cy="6.3" r="2" fill="none" stroke="#c8c8c8" stroke-width="1.1"/><path d="M1.5 11.5L12.5 0.8" stroke="#c8c8c8" stroke-width="1.1"/></svg>
<div class="t" style="left:1133.6px;top:577px;font-size:12px;line-height:12px;color:#c4c4c4;letter-spacing:0.2px;">13</div>
<svg style="left:640.5px;top:597.0px;" width="7" height="8" viewBox="0 0 7 8"><path d="M0 0L7 4.0L0 8Z" fill="#6a6a6a"/></svg>
<svg style="left:653px;top:595px;" width="12" height="12" viewBox="0 0 12 12"><path d="M6 0.3L7.6 4.2L11.7 4.5L8.6 7.2L9.6 11.3L6 9.1L2.4 11.3L3.4 7.2L0.3 4.5L4.4 4.2Z" fill="#c8c8c8"/></svg>
<div class="t" style="left:670.4px;top:595px;font-size:12.5px;line-height:12.5px;color:#d2d2d2;-webkit-text-stroke:0.35px #d2d2d2;letter-spacing:0.34px;">Favorites</div>
<div class="a" style="left:635px;top:688px;width:208px;height:16px;background:#474747;"></div>
<svg style="left:639.0px;top:628px;" width="9" height="8" viewBox="0 0 9 8"><path d="M0 0H9L4.5 8Z" fill="#6a6a6a"/></svg>
<svg style="left:652.5px;top:626.5px;" width="14" height="11" viewBox="0 0 14 11"><path d="M0.6 10V1.1A0.6 0.6 0 0 1 1.2 0.5H4.6L5.9 1.9H10.9A0.6 0.6 0 0 1 11.5 2.5V3.6" fill="none" stroke="#c8c8c8" stroke-width="1.1"/><path d="M2.6 4.2H13.6L11.6 10.5H0.2Z" fill="#c8c8c8"/></svg>
<div class="t" style="left:670.4px;top:626px;font-size:12.5px;line-height:12.5px;color:#d2d2d2;-webkit-text-stroke:0.35px #d2d2d2;letter-spacing:0.5px;">Assets</div>
<svg style="left:653.0px;top:645px;" width="9" height="8" viewBox="0 0 9 8"><path d="M0 0H9L4.5 8Z" fill="#6a6a6a"/></svg>
<svg style="left:666.5px;top:642.5px;" width="14" height="11" viewBox="0 0 14 11"><path d="M0.6 10V1.1A0.6 0.6 0 0 1 1.2 0.5H4.6L5.9 1.9H10.9A0.6 0.6 0 0 1 11.5 2.5V3.6" fill="none" stroke="#c8c8c8" stroke-width="1.1"/><path d="M2.6 4.2H13.6L11.6 10.5H0.2Z" fill="#c8c8c8"/></svg>
<div class="t" style="left:683.2px;top:642px;font-size:12px;line-height:12px;color:#c4c4c4;letter-spacing:0.2px;">Consent</div>
<svg style="left:680.5px;top:658px;" width="13" height="11" viewBox="0 0 13 11"><path d="M0 0.8A0.8 0.8 0 0 1 0.8 0H4.5L6 1.5H12.2A0.8 0.8 0 0 1 13 2.3V10.2A0.8 0.8 0 0 1 12.2 11H0.8A0.8 0.8 0 0 1 0 10.2Z" fill="#c8c8c8"/></svg>
<div class="t" style="left:697.3px;top:658px;font-size:12px;line-height:12px;color:#c4c4c4;letter-spacing:0.2px;">Icons</div>
<svg style="left:680.5px;top:674px;" width="13" height="11" viewBox="0 0 13 11"><path d="M0 0.8A0.8 0.8 0 0 1 0.8 0H4.5L6 1.5H12.2A0.8 0.8 0 0 1 13 2.3V10.2A0.8 0.8 0 0 1 12.2 11H0.8A0.8 0.8 0 0 1 0 10.2Z" fill="#c8c8c8"/></svg>
<div class="t" style="left:697.3px;top:674px;font-size:12px;line-height:12px;color:#c4c4c4;letter-spacing:0.2px;">Resources</div>
<svg style="left:680.5px;top:690px;" width="13" height="11" viewBox="0 0 13 11"><path d="M0 0.8A0.8 0.8 0 0 1 0.8 0H4.5L6 1.5H12.2A0.8 0.8 0 0 1 13 2.3V10.2A0.8 0.8 0 0 1 12.2 11H0.8A0.8 0.8 0 0 1 0 10.2Z" fill="#c8c8c8"/></svg>
<div class="t" style="left:697.3px;top:690px;font-size:12px;line-height:12px;color:#c4c4c4;letter-spacing:0.2px;">Scenes</div>
<svg style="left:680.5px;top:706px;" width="13" height="11" viewBox="0 0 13 11"><path d="M0 0.8A0.8 0.8 0 0 1 0.8 0H4.5L6 1.5H12.2A0.8 0.8 0 0 1 13 2.3V10.2A0.8 0.8 0 0 1 12.2 11H0.8A0.8 0.8 0 0 1 0 10.2Z" fill="#c8c8c8"/></svg>
<div class="t" style="left:697.3px;top:706px;font-size:12px;line-height:12px;color:#c4c4c4;letter-spacing:0.2px;">Scripts</div>
<svg style="left:653.5px;top:724.0px;" width="7" height="8" viewBox="0 0 7 8"><path d="M0 0L7 4.0L0 8Z" fill="#6a6a6a"/></svg>
<svg style="left:667px;top:722px;" width="13" height="11" viewBox="0 0 13 11"><path d="M0 0.8A0.8 0.8 0 0 1 0.8 0H4.5L6 1.5H12.2A0.8 0.8 0 0 1 13 2.3V10.2A0.8 0.8 0 0 1 12.2 11H0.8A0.8 0.8 0 0 1 0 10.2Z" fill="#c8c8c8"/></svg>
<div class="t" style="left:683.2px;top:722px;font-size:12px;line-height:12px;color:#c4c4c4;letter-spacing:0.2px;">Consent_Example</div>
<div class="a" style="left:843px;top:593px;width:12px;height:145px;background:#383838;"></div>
<div class="a" style="left:845px;top:609px;width:9px;height:95px;background:#5e5e5e;border-radius:5px"></div>
<svg style="left:845px;top:599px;" width="8" height="5" viewBox="0 0 8 5"><path d="M0 5H8L4 0Z" fill="#c4c4c4"/></svg>
<svg style="left:845.0px;top:727px;" width="8" height="5" viewBox="0 0 8 5"><path d="M0 0H8L4.0 5Z" fill="#c4c4c4"/></svg>
<div class="a" style="left:855px;top:592px;width:1px;height:146px;background:#242424;"></div>
<div class="a" style="left:856px;top:593px;width:295px;height:20px;background:#3e3e3e;"></div>
<div class="a" style="left:856px;top:613px;width:295px;height:1px;background:#2e2e2e;"></div>
<div class="t" style="left:860.9px;top:597px;font-size:12px;line-height:12px;color:#b4b4b4;letter-spacing:0.2px;">Assets</div>
<svg style="left:904px;top:599px;" width="6" height="9" viewBox="0 0 6 9"><path d="M0.8 0.8L4.8 4.5L0.8 8.2" fill="none" stroke="#9a9a9a" stroke-width="1.2"/></svg>
<div class="t" style="left:915.7px;top:597px;font-size:12px;line-height:12px;color:#b4b4b4;letter-spacing:0.2px;">Consent</div>
<svg style="left:969px;top:599px;" width="6" height="9" viewBox="0 0 6 9"><path d="M0.8 0.8L4.8 4.5L0.8 8.2" fill="none" stroke="#9a9a9a" stroke-width="1.2"/></svg>
<div class="t" style="left:980.9px;top:597px;font-size:12.5px;line-height:12.5px;color:#d2d2d2;-webkit-text-stroke:0.35px #d2d2d2;letter-spacing:0.1px;">Scenes</div>
<svg style="left:874px;top:614px;" width="13" height="16" viewBox="0 0 13 16"><path d="M0.5 0.5H8.3L12.2 4.4V15.2H0.5Z" fill="#f4f4f4"/><g transform="translate(2.3 4.3) scale(0.6)"><g fill="none" stroke="#1a1a1a" stroke-width="2.4" stroke-linejoin="miter"><path d="M5.6 1.2L1.2 3.7V9.6"/><path d="M8.4 1.2L12.8 3.7V9.6"/><path d="M3.2 5L7 7.1L10.8 5M7 7.1V13"/><path d="M2.6 11L7 13.6L11.4 11"/></g></g></svg>
<div class="t" style="left:890.6px;top:617px;font-size:12px;line-height:12px;color:#c4c4c4;letter-spacing:0.3px;">ConsentSettingsScene</div>
<div class="a" style="left:856px;top:717px;width:295px;height:1px;background:#2e2e2e;"></div>
<div class="a" style="left:856px;top:718px;width:295px;height:20px;background:#404040;"></div>
<div class="a" style="left:856px;top:737px;width:295px;height:1px;background:#464646;"></div>
<div class="a" style="left:1090px;top:727px;width:46px;height:1.5px;background:#5a5a5a;"></div>
<svg style="left:1081px;top:723px;" width="10" height="10" viewBox="0 0 10 10"><circle cx="5" cy="5" r="4.8" fill="#909090"/></svg>
<div class="a" style="left:1048px;top:740px;width:1px;height:19px;background:#2a2a2a;"></div>
<div class="a" style="left:1074px;top:740px;width:1px;height:19px;background:#2a2a2a;"></div>
<div class="a" style="left:1100px;top:740px;width:1px;height:19px;background:#2a2a2a;"></div>
<div class="a" style="left:1126px;top:740px;width:1px;height:19px;background:#2a2a2a;"></div>
<svg style="left:1053px;top:742px;" width="14" height="15" viewBox="0 0 14 15"><g stroke="#ffc400" stroke-width="1.5" stroke-linecap="round" fill="none"><path d="M3.5 4.5L1.2 1.2M8.5 4.5L10.8 1.2M2.2 8H0.5M9.8 8H11.5M2.8 11.5L1 14M9.2 11.5L11 14"/></g><ellipse cx="6" cy="8.3" rx="4.2" ry="5.6" fill="#ffc400"/><rect x="9" y="7" width="5" height="8.5" fill="#191919"/><rect x="10.3" y="7.8" width="2.2" height="4.6" fill="#ffc400"/><rect x="10.3" y="13.2" width="2.2" height="1.9" fill="#ffc400"/></svg>
<svg style="left:1079px;top:742px;" width="15" height="15" viewBox="0 0 15 15"><ellipse cx="7" cy="3" rx="6.3" ry="2.6" fill="#c4c4c4"/><path d="M0.7 5.3Q7 9 13.3 5.3V7.8Q7 11.5 0.7 7.8Z" fill="#c4c4c4"/><path d="M0.7 10.3Q7 14 13.3 10.3V12Q7 15.5 0.7 12Z" fill="#c4c4c4"/><path d="M1 0.5L14.5 14.5" stroke="#191919" stroke-width="2.2"/><path d="M1 0.5L14.5 14.5" stroke="#c4c4c4" stroke-width="1"/></svg>
<svg style="left:1105px;top:742px;" width="15" height="15" viewBox="0 0 15 15"><path d="M2.5 5A5.5 5.5 0 0 1 12 3.5M12.5 10A5.5 5.5 0 0 1 3 11.5" fill="none" stroke="#c4c4c4" stroke-width="1.4"/><path d="M12.5 1.2V4.6H9.2Z" fill="#c4c4c4"/><path d="M2.5 13.8V10.4H5.8Z" fill="#c4c4c4"/><circle cx="7.5" cy="7.5" r="3" fill="#a0a0a0"/><path d="M1.5 0.8L14 14" stroke="#c4c4c4" stroke-width="1.2"/></svg>
<svg style="left:1131px;top:743px;" width="14" height="14" viewBox="0 0 14 14"><circle cx="7" cy="7" r="6.4" fill="none" stroke="#c4c4c4" stroke-width="1.1"/><path d="M4 7.2L6.2 9.3L10.2 5" fill="none" stroke="#c4c4c4" stroke-width="1.4"/></svg>
<div class="a" style="left:653px;top:130px;width:86px;height:21px;border:4px solid #00ff00;border-radius:3px"></div>
<div class="a" style="left:831px;top:276px;width:273px;height:23px;border:4.5px solid #00ff00;border-radius:3px"></div>
<div class="a" style="left:4px;top:3px;width:1148px;height:757px;border:1px solid rgba(255,255,255,0.2);border-radius:9px;pointer-events:none"></div></div></div>
</body></html>
